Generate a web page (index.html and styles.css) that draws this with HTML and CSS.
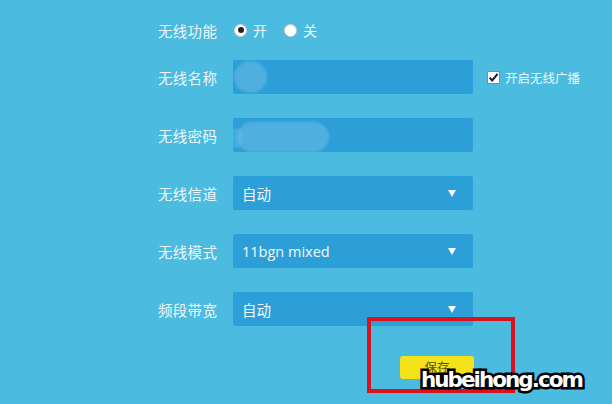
FILE: index.html
```
<!DOCTYPE html>
<html lang="zh">
<head>
<meta charset="utf-8">
<link rel="stylesheet" href="styles.css">
</head>
<body>
<div class="page">
  <div class="form">
    <div class="row row-first">
      <div class="label">无线功能</div>
      <div class="radios">
        <span class="radio checked"></span><span class="rtext">开</span>
        <span class="radio"></span><span class="rtext">关</span>
      </div>
    </div>
    <div class="row">
      <div class="label">无线名称</div>
      <div class="field">
        <span class="blob blob-a"></span>
      </div>
      <div class="check">
        <svg class="cbox" width="13" height="13" viewBox="0 0 13 13">
          <rect x="0.5" y="0.5" width="12" height="12" fill="#fff" stroke="#8a8a8a"/>
          <path d="M2.6 6.6 L5.2 9.4 L10.6 2.8" fill="none" stroke="#1e1e1e" stroke-width="2"/>
        </svg>
        <span class="ctext">开启无线广播</span>
      </div>
    </div>
    <div class="row">
      <div class="label">无线密码</div>
      <div class="field">
        <span class="blob blob-b"></span>
        <span class="blob blob-c"></span>
      </div>
    </div>
    <div class="row">
      <div class="label">无线信道</div>
      <div class="field select"><span class="val">自动</span><span class="arrow"></span></div>
    </div>
    <div class="row">
      <div class="label">无线模式</div>
      <div class="field select"><span class="val latin">11bgn mixed</span><span class="arrow"></span></div>
    </div>
    <div class="row">
      <div class="label">频段带宽</div>
      <div class="field select"><span class="val">自动</span><span class="arrow"></span></div>
    </div>
    <div class="actions">
      <div class="save">保存</div>
    </div>
  </div>
  <div class="redbox"></div>
  <div class="watermark">hubeihong.com</div>
</div>
</body>
</html>
```
FILE: styles.css
```
* { box-sizing: border-box; }
html, body { margin: 0; padding: 0; }
body {
  width: 612px;
  height: 404px;
  overflow: hidden;
  background: #4bbbe0;
  font-family: "Noto Sans CJK SC", "Noto Sans", sans-serif;
  color: #eef8fc;
}
.page {
  position: relative;
  width: 612px;
  height: 404px;
}
.form {
  padding: 13px 0 0 158px;
  display: flex;
  flex-direction: column;
  gap: 24px;
}
.row {
  display: flex;
  align-items: center;
  height: 34px;
}
.row-first {
  margin-bottom: -11px;
}
.label {
  width: 75px;
  font-size: 14.5px;
  letter-spacing: 0.3px;
  flex: none;
}
.radios {
  display: flex;
  align-items: center;
  font-size: 14px;
}
.radio {
  width: 13px;
  height: 13px;
  border-radius: 50%;
  background: #fff;
  border: 1px solid #d0d0d0;
  display: inline-flex;
  align-items: center;
  justify-content: center;
  margin-left: 1px;
}
.radio.checked::after {
  content: "";
  width: 6px;
  height: 6px;
  border-radius: 50%;
  background: #222;
}
.rtext { margin: 0 16px 0 6px; }
.field {
  position: relative;
  width: 240px;
  height: 34px;
  background: #2c9fd8;
  border-radius: 2px;
  overflow: hidden;
  flex: none;
}
.select {
  display: flex;
  align-items: center;
  justify-content: space-between;
  padding: 0 17px 0 9px;
}
.val { font-size: 14.5px; color: #f2f9fd; }
.val.latin { font-family: "Open Sans", "Noto Sans", sans-serif; font-size: 14.5px; }
.arrow {
  width: 0;
  height: 0;
  border-left: 4.5px solid transparent;
  border-right: 4.5px solid transparent;
  border-top: 7px solid #f4fafd;
}
.blob {
  position: absolute;
  background: rgba(110, 190, 230, 0.55);
  filter: blur(1px);
}
.blob-a {
  left: 1px;
  top: 1px;
  width: 33px;
  height: 32px;
  border-radius: 50%;
}
.blob-b {
  left: 4px;
  top: 4px;
  width: 92px;
  height: 30px;
  border-radius: 15px;
}
.blob-c {
  left: -4px;
  top: 10px;
  width: 14px;
  height: 20px;
  border-radius: 7px;
  background: rgba(110, 190, 230, 0.4);
}
.check {
  display: flex;
  align-items: center;
  margin-left: 14px;
  font-size: 12.5px;
}
.cbox { display: block; margin-right: 5px; }
.actions {
  padding: 6px 0 0 242px;
}
.save {
  width: 74px;
  height: 23px;
  background: #f4e21b;
  border-radius: 3px;
  color: #5a4f10;
  font-size: 12.5px;
  text-align: center;
  line-height: 22px;
}
.redbox {
  position: absolute;
  left: 367px;
  top: 317px;
  width: 148px;
  height: 76px;
  border: 4px solid #d8131b;
}
.watermark {
  position: absolute;
  left: 421px;
  top: 365px;
  font-family: "DejaVu Sans", sans-serif;
  font-weight: bold;
  font-size: 21.5px;
  line-height: 30px;
  color: #fff;
  -webkit-text-stroke: 5px #000;
  paint-order: stroke fill;
  letter-spacing: -2px;
}
```
